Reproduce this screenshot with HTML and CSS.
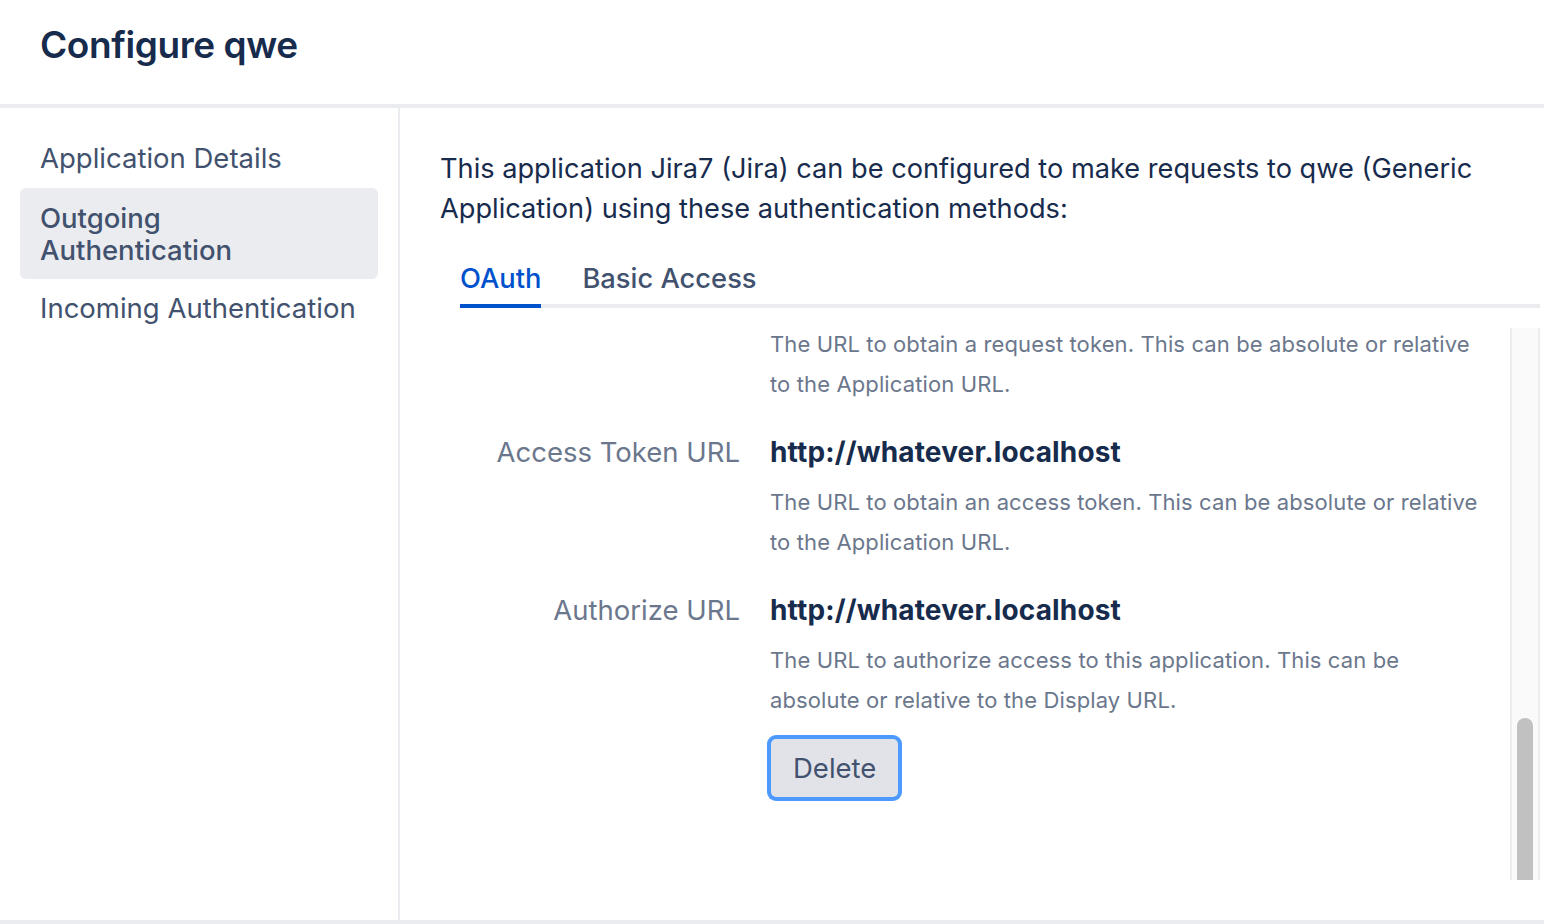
FILE: index.html
```html
<!DOCTYPE html>
<html lang="en">
<head>
<meta charset="utf-8">
<title>Configure qwe</title>
<link rel="stylesheet" href="styles.css">
</head>
<body>
<div class="page">
  <header class="page-header">
    <h1 class="page-title">Configure qwe</h1>
  </header>
  <div class="layout">
    <nav class="sidebar">
      <a class="nav-item">Application Details</a>
      <a class="nav-item nav-item-selected">Outgoing Authentication</a>
      <a class="nav-item">Incoming Authentication</a>
    </nav>
    <main class="main">
      <p class="intro">This application Jira7 (Jira) can be configured to make requests to qwe (Generic Application) using these authentication methods:</p>
      <div class="tabs">
        <div class="tab tab-active">OAuth</div>
        <div class="tab">Basic Access</div>
      </div>
      <div class="panel">
        <div class="panel-scroll">
          <div class="panel-content">
            <div class="form-row">
              <div class="form-label"></div>
              <div class="form-field">
                <div class="help">The URL to obtain a request token. This can be absolute or relative to the Application URL.</div>
              </div>
            </div>
            <div class="form-row">
              <div class="form-label">Access Token URL</div>
              <div class="form-field">
                <div class="value">http://whatever.localhost</div>
                <div class="help">The URL to obtain an access token. This can be absolute or relative to the Application URL.</div>
              </div>
            </div>
            <div class="form-row">
              <div class="form-label">Authorize URL</div>
              <div class="form-field">
                <div class="value">http://whatever.localhost</div>
                <div class="help">The URL to authorize access to this application. This can be absolute or relative to the Display URL.</div>
                <button class="btn" type="button">Delete</button>
              </div>
            </div>
          </div>
        </div>
        <div class="scrollbar"><div class="scroll-thumb"></div></div>
      </div>
    </main>
  </div>
</div>
</body>
</html>
```

FILE: styles.css
```css
* { box-sizing: border-box; }
html, body { margin: 0; padding: 0; height: 100%; }
body {
  font-family: Inter, "Noto Sans", "Liberation Sans", sans-serif;
  color: #172B4D;
  background: #fff;
}
.page {
  display: flex;
  flex-direction: column;
  height: 924px;
  border-bottom: 4px solid #EBECF0;
}
.page-header {
  height: 108px;
  border-bottom: 4px solid #EBECF0;
  padding: 0 40px;
  display: flex;
  align-items: center;
}
.page-title {
  margin: 0 0 16px 0;
  font-size: 37px;
  font-weight: 600;
  letter-spacing: -0.4px;
  color: #172B4D;
}
.layout {
  flex: 1;
  display: flex;
  min-height: 0;
}
.sidebar {
  width: 400px;
  flex: none;
  border-right: 2px solid #EBECF0;
  padding: 21px 20px;
  display: flex;
  flex-direction: column;
}
.nav-item {
  display: block;
  padding: 13px 20px 14px;
  font-size: 27.5px;
  line-height: 32px;
  color: #42526E;
  border-radius: 6px;
}
.nav-item-selected {
  background: #EBECF0;
  font-weight: 500;
  padding: 14px 120px 13px 20px;
}
.main {
  flex: 1;
  min-width: 0;
  padding: 40px 4px 40px 40px;
  display: flex;
  flex-direction: column;
}
.intro {
  margin: 0;
  font-size: 27.2px;
  line-height: 40px;
  color: #172B4D;
  padding-right: 50px;
  position: relative;
  top: 1px;
}
.tabs {
  margin: 30px 0 0 20px;
  display: flex;
  gap: 41px;
  border-bottom: 4px solid #EBECF0;
}
.tab {
  font-size: 27.3px;
  line-height: 40px;
  font-weight: 500;
  color: #42526E;
  padding-top: 1px;
  padding-bottom: 5px;
  margin-bottom: -4px;
  border-bottom: 4px solid transparent;
}
.tab-active {
  color: #0052CC;
  border-bottom-color: #0052CC;
}
.panel {
  flex: 1;
  min-height: 0;
  margin-top: 20px;
  display: flex;
}
.panel-scroll {
  flex: 1;
  min-width: 0;
  overflow: hidden;
}
.panel-content {
  margin-top: -4px;
}
.form-row {
  display: flex;
  gap: 30px;
  margin-bottom: 28px;
}
.form-label {
  width: 300px;
  flex: none;
  text-align: right;
  font-size: 27.5px;
  line-height: 40px;
  color: #6B778C;
}
.form-field {
  flex: 1;
  min-width: 0;
  padding-right: 20px;
}
.value {
  font-size: 28px;
  line-height: 40px;
  font-weight: 700;
  letter-spacing: 0.15px;
  color: #172B4D;
  margin-bottom: 10px;
}
.help {
  font-size: 22px;
  line-height: 40px;
  letter-spacing: 0.12px;
  color: #6B778C;
}
.btn {
  margin: 19px 0 0 1px;
  height: 58px;
  padding: 0 22px;
  border: none;
  border-radius: 5px;
  background: #E1E3E8;
  box-shadow: 0 0 0 4px #4C9AFF;
  font-family: inherit;
  font-size: 27.5px;
  color: #42526E;
}
.scrollbar {
  width: 30px;
  flex: none;
  background: #FAFAFA;
  border-left: 2px solid #EDEDED;
  border-right: 2px solid #EDEDED;
  display: flex;
  flex-direction: column;
  justify-content: flex-end;
  align-items: center;
}
.scroll-thumb {
  width: 16px;
  height: 162px;
  background: #C1C1C1;
  border-radius: 8px 8px 0 0;
}
```
